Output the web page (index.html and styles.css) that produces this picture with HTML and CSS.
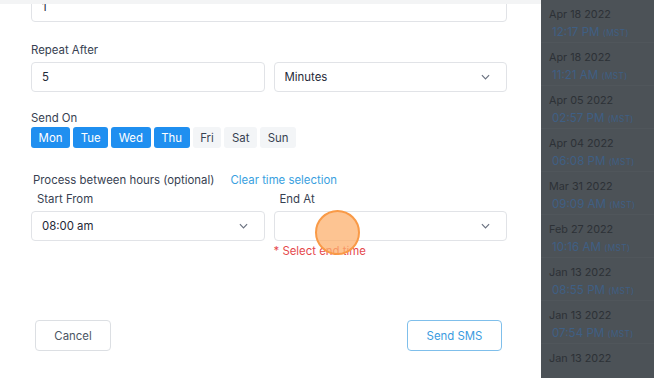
FILE: index.html
```html
<!DOCTYPE html>
<html lang="en">
<head>
  <meta charset="UTF-8">
  <title>Schedule SMS</title>
  <link rel="stylesheet" href="styles.css">
</head>
<body>

  <!-- Schedule form -->
  <div class="modal">
    <div class="topShade"></div>

    <div class="form">
      <div class="field" style="margin-top: -8px;">
        <input class="input" type="text" value="1">
      </div>

      <label class="label repeatLabel">Repeat After</label>
      <div class="row">
        <input class="input" type="text" value="5">
        <div class="select">
          <span>Minutes</span>
          <svg class="chevron" viewBox="0 0 10 6"><path d="M1 1l4 4 4-4"/></svg>
        </div>
      </div>

      <label class="label sendLabel">Send On</label>
      <div class="days">
        <button class="day active">Mon</button>
        <button class="day active">Tue</button>
        <button class="day active">Wed</button>
        <button class="day active">Thu</button>
        <button class="day">Fri</button>
        <button class="day">Sat</button>
        <button class="day">Sun</button>
      </div>

      <div class="hoursHead">
        <span>Process between hours (optional)</span>
        <a class="clearLink">Clear time selection</a>
      </div>

      <div class="row">
        <div class="col">
          <label class="label subLabel">Start From</label>
          <div class="select">
            <span>08:00 am</span>
            <svg class="chevron" viewBox="0 0 10 6"><path d="M1 1l4 4 4-4"/></svg>
          </div>
        </div>
        <div class="col">
          <label class="label subLabel">End At</label>
          <div class="select">
            <span></span>
            <svg class="chevron" viewBox="0 0 10 6"><path d="M1 1l4 4 4-4"/></svg>
          </div>
          <div class="error">* Select end time</div>
          <div class="cursor"></div>
        </div>
      </div>
    </div>

    <div class="footer">
      <button class="btn cancel">Cancel</button>
      <button class="btn send">Send SMS</button>
    </div>
  </div>

  <!-- History behind overlay -->
  <div class="history">
    <div class="entry"><div class="date">Apr 18 2022</div><div class="time">12:17 PM <small>(MST)</small></div></div>
    <div class="entry"><div class="date">Apr 18 2022</div><div class="time">11:21 AM <small>(MST)</small></div></div>
    <div class="entry"><div class="date">Apr 05 2022</div><div class="time">02:57 PM <small>(MST)</small></div></div>
    <div class="entry"><div class="date">Apr 04 2022</div><div class="time">06:08 PM <small>(MST)</small></div></div>
    <div class="entry"><div class="date">Mar 31 2022</div><div class="time">09:09 AM <small>(MST)</small></div></div>
    <div class="entry"><div class="date">Feb 27 2022</div><div class="time">10:16 AM <small>(MST)</small></div></div>
    <div class="entry"><div class="date">Jan 13 2022</div><div class="time">08:55 PM <small>(MST)</small></div></div>
    <div class="entry"><div class="date">Jan 13 2022</div><div class="time">07:54 PM <small>(MST)</small></div></div>
    <div class="entry"><div class="date">Jan 13 2022</div></div>
  </div>

</body>
</html>
```

FILE: styles.css
```css
body {
  margin: 0;
  height: 378px;
  overflow: hidden;
  display: flex;
  font-family: 'Inter', 'Liberation Sans', sans-serif;
  font-size: 11.4px;
  color: #374151;
  background: #4c5257;
}

.modal {
  position: relative;
  width: 541px;
  height: 378px;
  background: white;
  display: flex;
  flex-direction: column;
  overflow: hidden;
}

.topShade {
  position: absolute;
  top: 0;
  left: 0;
  right: 0;
  height: 4px;
  background: #f3f4f5;
}

.form {
  padding: 0 34px 0 31px;
}

.input,
.select {
  box-sizing: border-box;
  height: 30px;
  border: 1px solid #e1e3e7;
  border-radius: 4px;
  background: white;
  font-family: inherit;
  font-size: 11.4px;
  color: #1f2937;
  padding: 0 10px;
  outline: none;
  width: 100%;
  min-width: 0;
}

.select {
  display: flex;
  align-items: center;
  justify-content: space-between;
  padding-right: 16px;
}

.chevron {
  width: 9px;
  height: 6px;
  fill: none;
  stroke: #6b7280;
  stroke-width: 1.3;
}

.label {
  display: block;
  line-height: 16px;
  color: #374151;
}

.repeatLabel {
  margin-top: 20px;
  margin-bottom: 4px;
}

.sendLabel {
  margin-top: 18px;
  margin-bottom: 1px;
}

.row {
  display: grid;
  grid-template-columns: 1fr 1fr;
  gap: 9px;
}

.col {
  position: relative;
}

.days {
  display: flex;
  gap: 3px;
}

.day {
  height: 21px;
  padding: 0 7.6px;
  border: none;
  border-radius: 3px;
  background: #f3f5f7;
  color: #374151;
  font-family: inherit;
  font-size: 11.4px;
}

.day.active {
  background: #1f8ff0;
  color: white;
}

.hoursHead {
  display: flex;
  gap: 16px;
  margin-top: 24px;
  padding-left: 2px;
  line-height: 16px;
}

.clearLink {
  color: #3a9fe0;
}

.subLabel {
  padding-left: 6px;
  margin: 3px 0 4px;
}

.error {
  color: #e5484d;
  margin-top: 3px;
  line-height: 14px;
}

.cursor {
  position: absolute;
  left: 41px;
  top: 22px;
  width: 41px;
  height: 41px;
  border-radius: 50%;
  background: rgba(252, 176, 110, 0.75);
  border: 2px solid #f99a47;
}

.footer {
  display: flex;
  justify-content: space-between;
  padding: 0 39px 0 35px;
  margin-top: 62px;
}

.btn {
  height: 31px;
  border-radius: 4px;
  background: white;
  font-family: inherit;
  font-size: 11.4px;
  cursor: pointer;
}

.cancel {
  width: 76px;
  border: 1px solid #dcdfe3;
  color: #4b5563;
}

.send {
  width: 95px;
  border: 1.5px solid #7fbfeb;
  color: #3b9be0;
}

.history {
  flex: 1;
  background: #4c5257;
}

.entry {
  height: 43px;
  box-sizing: border-box;
  padding: 7px 0 0 8px;
  border-bottom: 1px solid #50565b;
}

.date {
  color: #2c3136;
  font-size: 10.8px;
  line-height: 16px;
}

.time {
  color: #3f5f84;
  font-size: 11.6px;
  line-height: 16px;
  margin-top: 1px;
  padding-left: 3px;
}

.time small {
  font-size: 8.4px;
  letter-spacing: 0.3px;
}
```
